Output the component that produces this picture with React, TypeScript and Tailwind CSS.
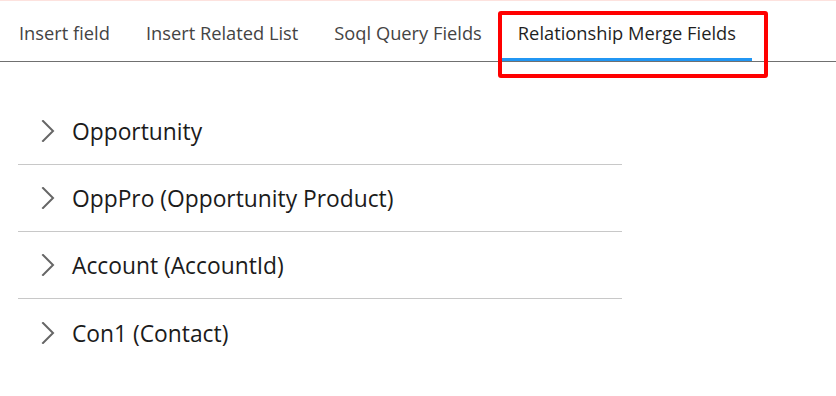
import React from "react";

const tabs = ["Insert field", "Insert Related List", "Soql Query Fields", "Relationship Merge Fields"];
const items = ["Opportunity", "OppPro (Opportunity Product)", "Account (AccountId)", "Con1 (Contact)"];

function Chevron() {
  return (
    <svg width="14" height="22" viewBox="0 0 14 22" className="shrink-0">
      <polyline points="2,1 12,11 2,21" fill="none" stroke="#666666" strokeWidth="2" strokeLinecap="square" />
    </svg>
  );
}

export default function App() {
  return (
    <div
      className="relative w-[836px] h-[396px] bg-white overflow-hidden"
      style={{ fontFamily: '"Open Sans", "Noto Sans", sans-serif' }}
    >
      <div className="h-px bg-[#fde2de]" />
      <div className="flex pl-[3px] gap-[4px] border-b border-[#707070] h-[61px]">
        {tabs.map((t, i) => (
          <div key={t} className="relative h-full px-4 flex items-center pt-[4px]">
            <span
              className={`text-[18.3px] ${i === 3 ? "text-[#1f1f1f]" : "text-[#444444]"}`}
            >
              {t}
            </span>
            {i === 3 && <div className="absolute left-0 right-0 bottom-0 h-[3px] bg-[#2196f3]" />}
          </div>
        ))}
      </div>
      <div className="absolute left-[498px] top-[11px] w-[270px] h-[67px] border-4 border-[#ff0000] rounded-[3px]" />
      <div className="ml-[18px] w-[604px] mt-[36px]">
        {items.map((it, i) => (
          <div
            key={it}
            className={`h-[67px] flex items-center pl-[23px] gap-[17px] ${i < items.length - 1 ? "border-b border-[#c8c8c8]" : ""}`}
          >
            <Chevron />
            <span className="text-[22.8px] text-[#1b1b1b] pt-[3px]">{it}</span>
          </div>
        ))}
      </div>
    </div>
  );
}
